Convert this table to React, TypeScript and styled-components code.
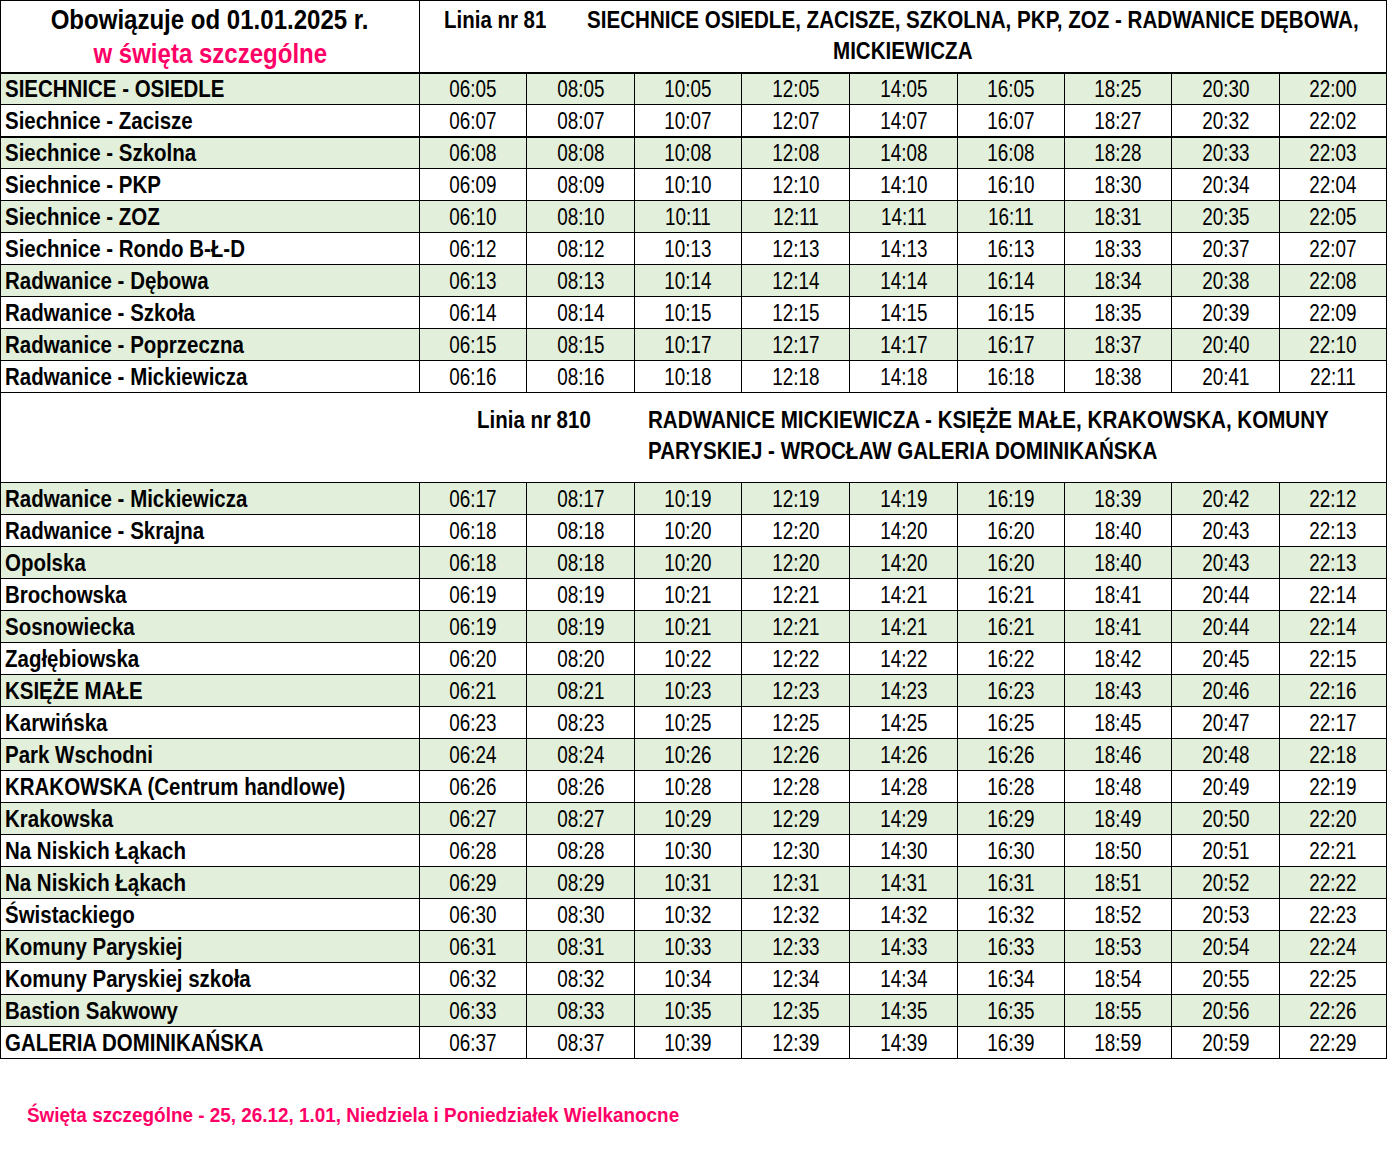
import React from "react";
import styled, { createGlobalStyle } from "styled-components";

const FONT = `"Liberation Sans", Arial, sans-serif`;
const GREEN = "#e2efda";
const PINK = "#ff0066";

const Global = createGlobalStyle`
  html, body { margin: 0; padding: 0; background: #fff; overflow: hidden; }
  body { font-family: ${FONT}; color: #000; }
`;

const Page = styled.div`
  width: 1387px;
  height: 1172px;
  background: #fff;
  overflow: hidden;
`;

/* Arial Narrow look: Arial condensed horizontally */
const Narrow = styled.span<{ $origin?: string; $sx?: number }>`
  display: inline-block;
  white-space: nowrap;
  transform: scaleX(${(p) => p.$sx ?? 0.89});
  transform-origin: ${(p) => p.$origin ?? "left"} center;
`;

const Table = styled.table`
  width: 1387px;
  border-collapse: collapse;
  table-layout: fixed;
  font-family: ${FONT};
`;

const Row = styled.tr<{ $green?: boolean; $thick?: boolean }>`
  height: 32px;
  background: ${(p) => (p.$green ? GREEN : "#fff")};
  & > td {
    border-bottom: ${(p) => (p.$thick ? "2px" : "1px")} solid #000;
  }
`;

const Stop = styled.td`
  border: 1px solid #000;
  padding: 0 0 0 4px;
  font-weight: bold;
  font-size: 23px;
  line-height: 30px;
  vertical-align: bottom;
  white-space: nowrap;
  overflow: hidden;
`;

const Time = styled.td`
  border: 1px solid #000;
  padding: 0;
  text-align: center;
  font-size: 23px;
  line-height: 30px;
  vertical-align: bottom;
  white-space: nowrap;
  overflow: hidden;
`;

const HeadRow = styled.tr`
  height: 72px;
  & > td {
    border: 1px solid #000;
    border-bottom: 2px solid #000;
    vertical-align: top;
    padding: 0;
    overflow: hidden;
  }
`;

const Title = styled.div`
  text-align: center;
  font-weight: bold;
  font-size: 27px;
  line-height: 34px;
  padding-top: 2px;
`;

const TitleLine = styled.div<{ $pink?: boolean }>`
  color: ${(p) => (p.$pink ? PINK : "#000")};
`;

const LineHead = styled.div<{ $pl: number; $pt: number }>`
  display: flex;
  align-items: flex-start;
  padding-left: ${(p) => p.$pl}px;
  padding-top: ${(p) => p.$pt}px;
  font-weight: bold;
  font-size: 23px;
  line-height: 31px;
`;

const LineNo = styled.div<{ $w: number }>`
  width: ${(p) => p.$w}px;
  flex: none;
  white-space: nowrap;
`;

const Route = styled.div`
  flex: 1;
  min-width: 0;
  white-space: nowrap;
`;

const RouteLine = styled.div<{ $indent?: number }>`
  margin-left: ${(p) => p.$indent ?? 0}px;
`;

const SectionRow = styled.tr`
  height: 90px;
  & > td {
    border: 1px solid #000;
    vertical-align: top;
    padding: 0;
    overflow: hidden;
  }
`;

const Footer = styled.div`
  padding: 42px 0 0 27px;
  color: ${PINK};
  font-weight: bold;
  font-size: 21px;
  line-height: 28px;
`;

type Stp = [string, string[]];

const s1: Stp[] = [
  ["SIECHNICE - OSIEDLE", ["06:05", "08:05", "10:05", "12:05", "14:05", "16:05", "18:25", "20:30", "22:00"]],
  ["Siechnice - Zacisze", ["06:07", "08:07", "10:07", "12:07", "14:07", "16:07", "18:27", "20:32", "22:02"]],
  ["Siechnice - Szkolna", ["06:08", "08:08", "10:08", "12:08", "14:08", "16:08", "18:28", "20:33", "22:03"]],
  ["Siechnice - PKP", ["06:09", "08:09", "10:10", "12:10", "14:10", "16:10", "18:30", "20:34", "22:04"]],
  ["Siechnice - ZOZ", ["06:10", "08:10", "10:11", "12:11", "14:11", "16:11", "18:31", "20:35", "22:05"]],
  ["Siechnice - Rondo B-Ł-D", ["06:12", "08:12", "10:13", "12:13", "14:13", "16:13", "18:33", "20:37", "22:07"]],
  ["Radwanice - Dębowa", ["06:13", "08:13", "10:14", "12:14", "14:14", "16:14", "18:34", "20:38", "22:08"]],
  ["Radwanice - Szkoła", ["06:14", "08:14", "10:15", "12:15", "14:15", "16:15", "18:35", "20:39", "22:09"]],
  ["Radwanice - Poprzeczna", ["06:15", "08:15", "10:17", "12:17", "14:17", "16:17", "18:37", "20:40", "22:10"]],
  ["Radwanice - Mickiewicza", ["06:16", "08:16", "10:18", "12:18", "14:18", "16:18", "18:38", "20:41", "22:11"]],
];

const s2: Stp[] = [
  ["Radwanice - Mickiewicza", ["06:17", "08:17", "10:19", "12:19", "14:19", "16:19", "18:39", "20:42", "22:12"]],
  ["Radwanice - Skrajna", ["06:18", "08:18", "10:20", "12:20", "14:20", "16:20", "18:40", "20:43", "22:13"]],
  ["Opolska", ["06:18", "08:18", "10:20", "12:20", "14:20", "16:20", "18:40", "20:43", "22:13"]],
  ["Brochowska", ["06:19", "08:19", "10:21", "12:21", "14:21", "16:21", "18:41", "20:44", "22:14"]],
  ["Sosnowiecka", ["06:19", "08:19", "10:21", "12:21", "14:21", "16:21", "18:41", "20:44", "22:14"]],
  ["Zagłębiowska", ["06:20", "08:20", "10:22", "12:22", "14:22", "16:22", "18:42", "20:45", "22:15"]],
  ["KSIĘŻE MAŁE", ["06:21", "08:21", "10:23", "12:23", "14:23", "16:23", "18:43", "20:46", "22:16"]],
  ["Karwińska", ["06:23", "08:23", "10:25", "12:25", "14:25", "16:25", "18:45", "20:47", "22:17"]],
  ["Park Wschodni", ["06:24", "08:24", "10:26", "12:26", "14:26", "16:26", "18:46", "20:48", "22:18"]],
  ["KRAKOWSKA (Centrum handlowe)", ["06:26", "08:26", "10:28", "12:28", "14:28", "16:28", "18:48", "20:49", "22:19"]],
  ["Krakowska", ["06:27", "08:27", "10:29", "12:29", "14:29", "16:29", "18:49", "20:50", "22:20"]],
  ["Na Niskich Łąkach", ["06:28", "08:28", "10:30", "12:30", "14:30", "16:30", "18:50", "20:51", "22:21"]],
  ["Na Niskich Łąkach", ["06:29", "08:29", "10:31", "12:31", "14:31", "16:31", "18:51", "20:52", "22:22"]],
  ["Świstackiego", ["06:30", "08:30", "10:32", "12:32", "14:32", "16:32", "18:52", "20:53", "22:23"]],
  ["Komuny Paryskiej", ["06:31", "08:31", "10:33", "12:33", "14:33", "16:33", "18:53", "20:54", "22:24"]],
  ["Komuny Paryskiej szkoła", ["06:32", "08:32", "10:34", "12:34", "14:34", "16:34", "18:54", "20:55", "22:25"]],
  ["Bastion Sakwowy", ["06:33", "08:33", "10:35", "12:35", "14:35", "16:35", "18:55", "20:56", "22:26"]],
  ["GALERIA DOMINIKAŃSKA", ["06:37", "08:37", "10:39", "12:39", "14:39", "16:39", "18:59", "20:59", "22:29"]],
];

const colW = [419, 107, 108, 107, 108, 108, 107, 107, 108, 107];

function Rows({ data, thickAt }: { data: Stp[]; thickAt?: number }) {
  return (
    <>
      {data.map(([name, times], i) => (
        <Row key={i} $green={i % 2 === 0} $thick={i === thickAt}>
          <Stop>
            <Narrow>{name}</Narrow>
          </Stop>
          {times.map((t, j) => (
            <Time key={j}>
              <Narrow $origin="center" $sx={0.82}>
                {t}
              </Narrow>
            </Time>
          ))}
        </Row>
      ))}
    </>
  );
}

export default function App() {
  return (
    <Page>
      <Global />
      <Table>
        <colgroup>
          {colW.map((w, i) => (
            <col key={i} style={{ width: w }} />
          ))}
        </colgroup>
        <tbody>
          <HeadRow>
            <td>
              <Title>
                <TitleLine>
                  <Narrow $origin="center">Obowiązuje od 01.01.2025 r.</Narrow>
                </TitleLine>
                <TitleLine $pink>
                  <Narrow $origin="center">w święta szczególne</Narrow>
                </TitleLine>
              </Title>
            </td>
            <td colSpan={9}>
              <LineHead $pl={24} $pt={4}>
                <LineNo $w={143}>
                  <Narrow>Linia nr 81</Narrow>
                </LineNo>
                <Route>
                  <RouteLine>
                    <Narrow $sx={0.895}>
                      SIECHNICE OSIEDLE, ZACISZE, SZKOLNA, PKP, ZOZ - RADWANICE DĘBOWA,
                    </Narrow>
                  </RouteLine>
                  <RouteLine $indent={246}>
                    <Narrow $sx={0.895}>MICKIEWICZA</Narrow>
                  </RouteLine>
                </Route>
              </LineHead>
            </td>
          </HeadRow>
          <Rows data={s1} thickAt={1} />
          <SectionRow>
            <td colSpan={10}>
              <LineHead $pl={476} $pt={12}>
                <LineNo $w={171}>
                  <Narrow>Linia nr 810</Narrow>
                </LineNo>
                <Route>
                  <RouteLine>
                    <Narrow $sx={0.895}>RADWANICE MICKIEWICZA - KSIĘŻE MAŁE, KRAKOWSKA, KOMUNY</Narrow>
                  </RouteLine>
                  <RouteLine>
                    <Narrow $sx={0.895}>PARYSKIEJ - WROCŁAW GALERIA DOMINIKAŃSKA</Narrow>
                  </RouteLine>
                </Route>
              </LineHead>
            </td>
          </SectionRow>
          <Rows data={s2} />
        </tbody>
      </Table>
      <Footer>
        <Narrow $sx={0.9}>
          Święta szczególne - 25, 26.12, 1.01, Niedziela i Poniedziałek Wielkanocne
        </Narrow>
      </Footer>
    </Page>
  );
}
